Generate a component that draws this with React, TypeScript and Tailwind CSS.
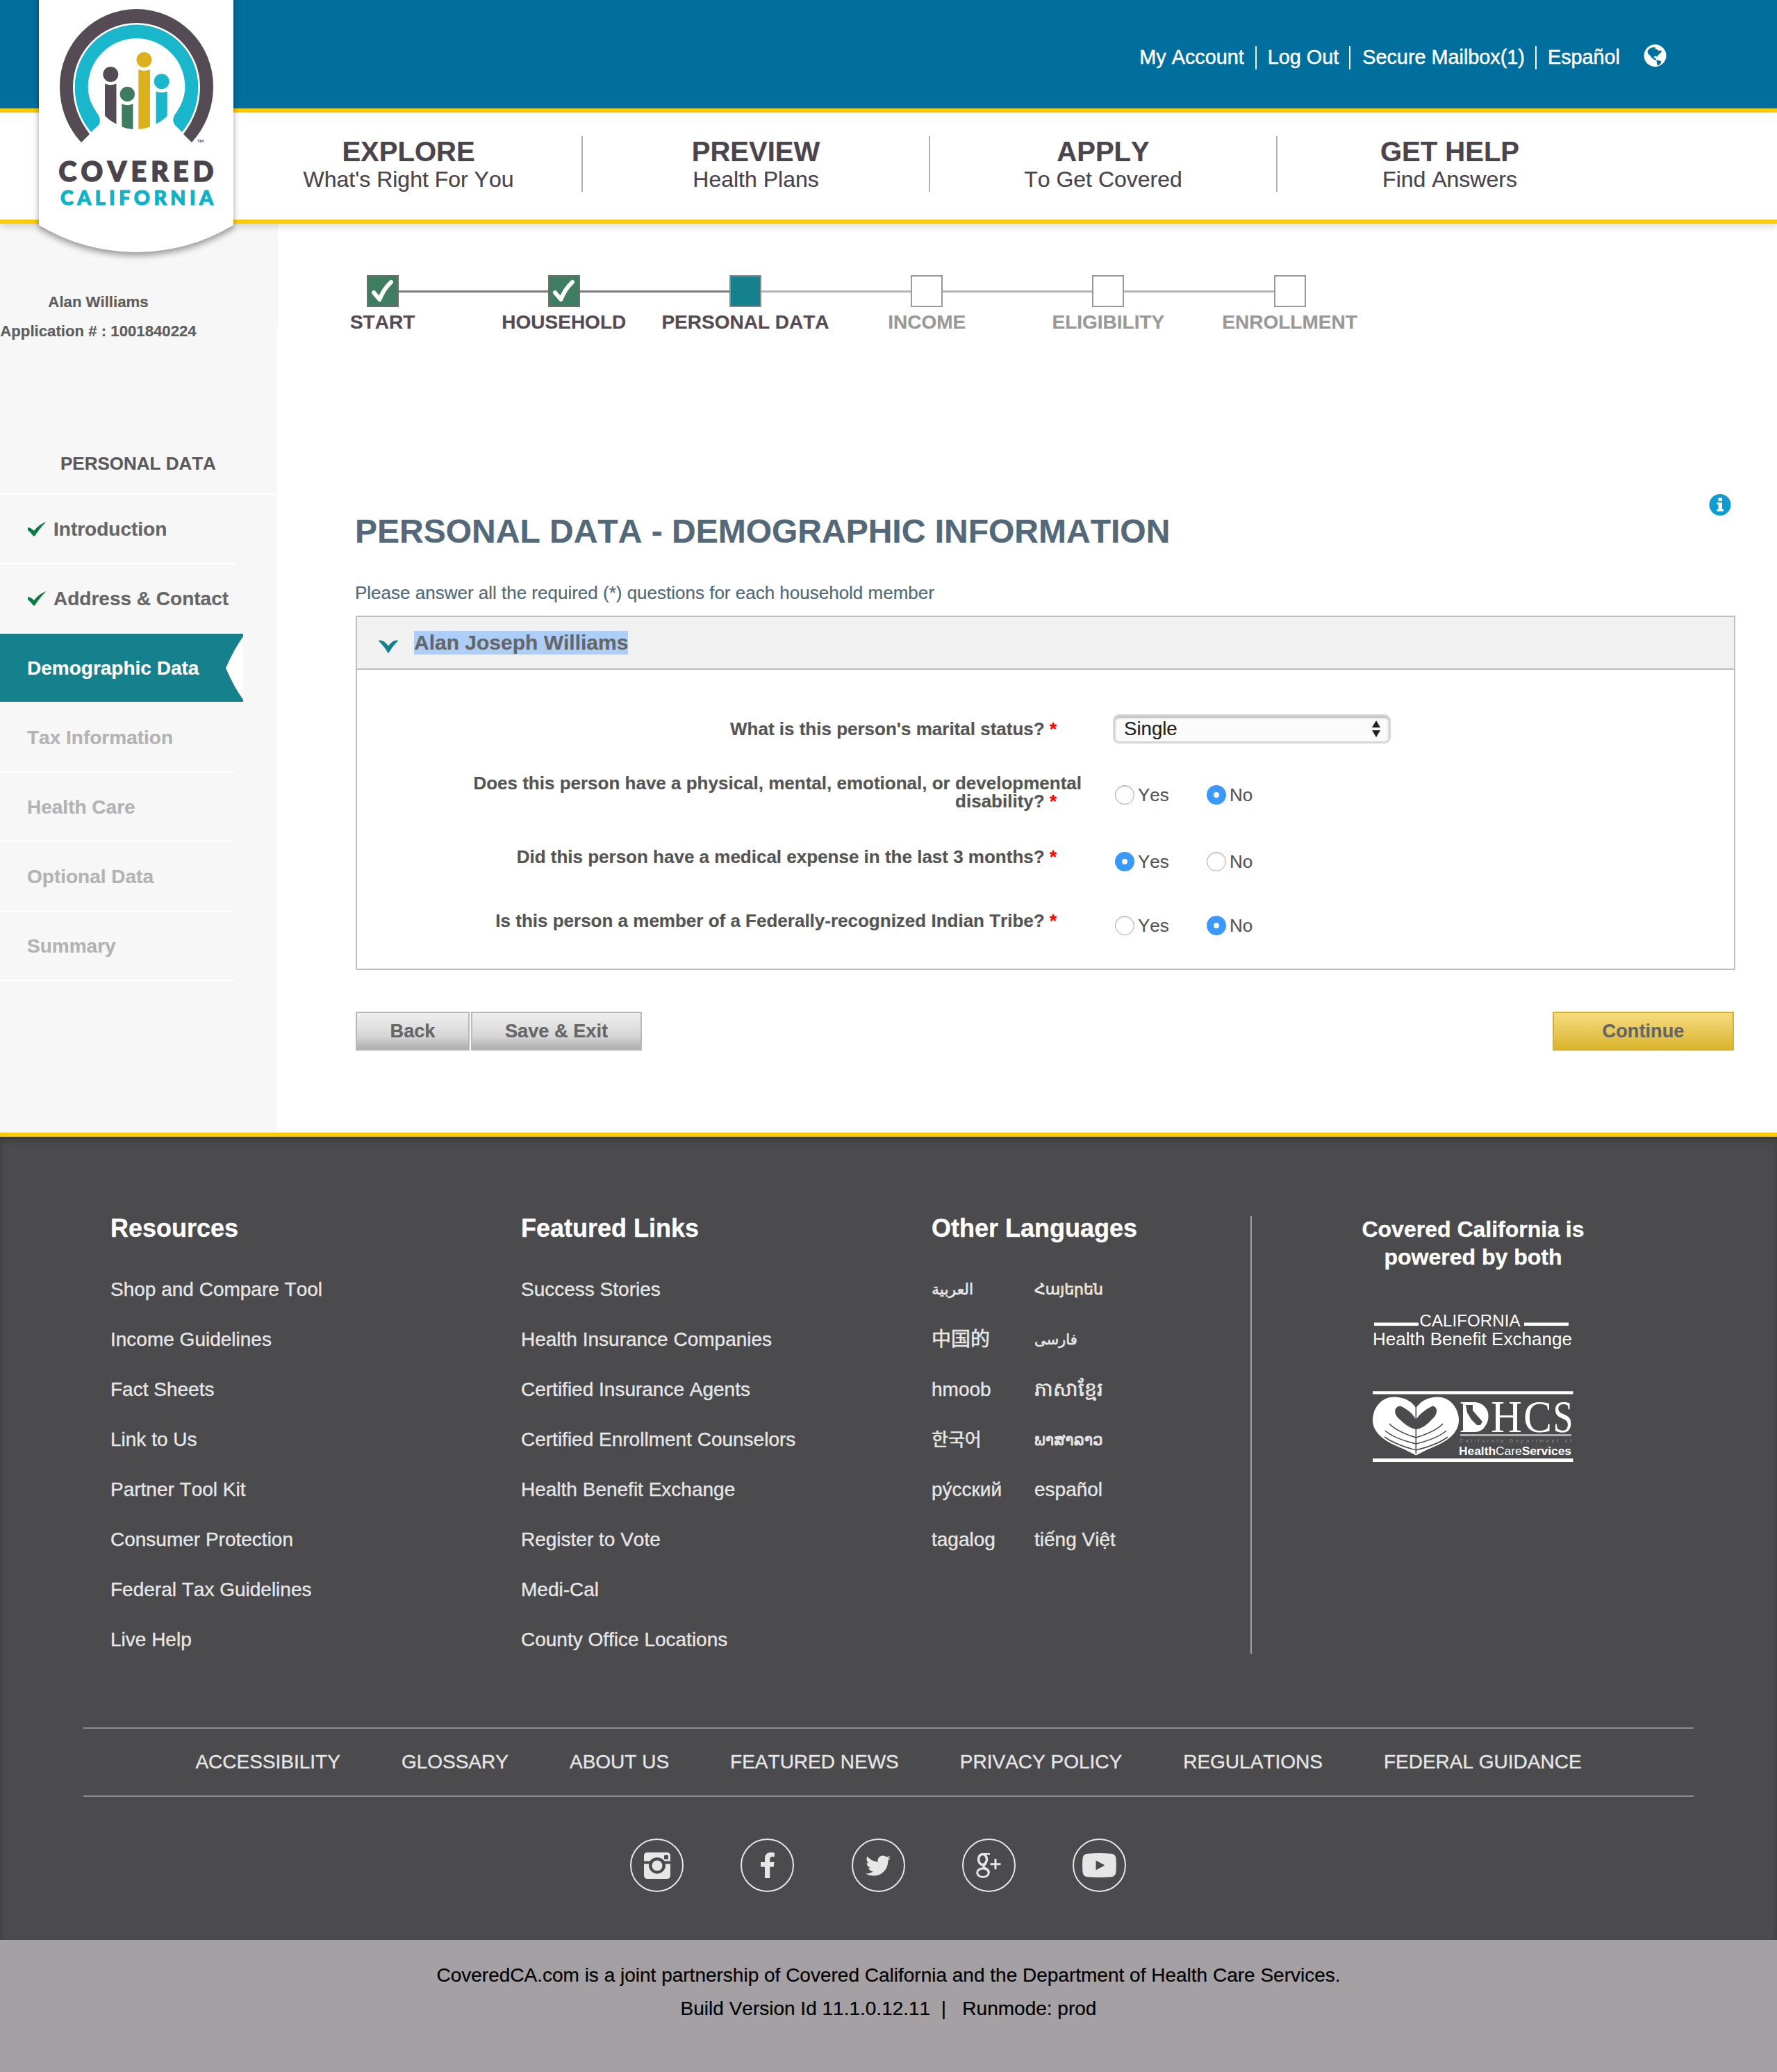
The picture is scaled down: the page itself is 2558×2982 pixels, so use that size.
import type { ReactNode } from "react";
import { FaFacebookF, FaTwitter } from "react-icons/fa";

const NAV = [
  ["EXPLORE", "What's Right For You"],
  ["PREVIEW", "Health Plans"],
  ["APPLY", "To Get Covered"],
  ["GET HELP", "Find Answers"],
];

const STEPS: { label: string; state: "done" | "current" | "todo" }[] = [
  { label: "START", state: "done" },
  { label: "HOUSEHOLD", state: "done" },
  { label: "PERSONAL DATA", state: "current" },
  { label: "INCOME", state: "todo" },
  { label: "ELIGIBILITY", state: "todo" },
  { label: "ENROLLMENT", state: "todo" },
];

const RESOURCES = [
  "Shop and Compare Tool",
  "Income Guidelines",
  "Fact Sheets",
  "Link to Us",
  "Partner Tool Kit",
  "Consumer Protection",
  "Federal Tax Guidelines",
  "Live Help",
];

const FEATURED = [
  "Success Stories",
  "Health Insurance Companies",
  "Certified Insurance Agents",
  "Certified Enrollment Counselors",
  "Health Benefit Exchange",
  "Register to Vote",
  "Medi-Cal",
  "County Office Locations",
];

const LANGS_A: [string, string][] = [
  ["العربية", "text-[22px] [-webkit-text-stroke:0.6px_currentColor]"],
  ["中国的", "text-[28px] [-webkit-text-stroke:0.6px_currentColor]"],
  ["hmoob", "text-[28px]"],
  ["한국어", "text-[26px] [-webkit-text-stroke:0.6px_currentColor]"],
  ["ру́сский", "text-[28px]"],
  ["tagalog", "text-[28px]"],
];

const LANGS_B: [string, string][] = [
  ["Հայերեն", "text-[22px] [-webkit-text-stroke:0.8px_currentColor]"],
  ["فارسی", "text-[21px] [-webkit-text-stroke:0.6px_currentColor]"],
  ["ភាសាខ្មែរ", "text-[28px] [-webkit-text-stroke:0.6px_currentColor]"],
  ["ພາສາລາວ", "text-[23px] [-webkit-text-stroke:0.8px_currentColor]"],
  ["español", "text-[28px]"],
  ["tiếng Việt", "text-[28px]"],
];

const FOOTER_NAV = [
  "ACCESSIBILITY",
  "GLOSSARY",
  "ABOUT US",
  "FEATURED NEWS",
  "PRIVACY POLICY",
  "REGULATIONS",
  "FEDERAL GUIDANCE",
];

function Logo() {
  return (
    <svg width="400" height="400" viewBox="0 0 400 400" className="absolute left-0 top-0 z-20">
      <g style={{ filter: "drop-shadow(0 5px 5px rgba(0,0,0,0.38))" }}>
        <path d="M56 -20V324A270.8 270.8 0 0 0 336 324V-20Z" fill="#fff" />
      </g>
      <path
        d="M117 205C97 183 86 155 86 124A110.5 111 0 0 1 307 124C307 155 296 183 276 205L264 193C280 172 288 150 288 125A91.5 92 0 0 0 105 125C105 150 113 172 129 193Z"
        fill="#544b54"
      />
      <path
        d="M131 190C116 172 107.7 150 107.7 125A88.8 89.5 0 0 1 285.3 125C285.3 150 277 172 262 190L252 180Q247 174 251 166C261 152 266.3 140 266.3 125A69.8 69.8 0 0 0 126.7 125C126.7 140 132 152 142 166Q146 174 142 180Z"
        fill="#1ab7cc"
      />
      <circle cx="159.3" cy="107" r="11" fill="#544b54" />
      <path d="M151 120.500Q159.300 124 167.500 120.500V178.500Q158 174 151 166.500Z" fill="#544b54" />
      <circle cx="183.300" cy="135.500" r="10.700" fill="#3d7c5f" />
      <path d="M175.300 149.500Q183.300 153 191.500 149.500V186Q183 185.500 175.300 182.500Z" fill="#3d7c5f" />
      <circle cx="207.500" cy="86" r="11" fill="#dbb21e" />
      <path d="M199.300 100Q207.500 103.500 216 100V182.500Q208 185.500 199.300 186Z" fill="#dbb21e" />
      <circle cx="232.700" cy="117.300" r="11" fill="#1ab7cc" />
      <path d="M224.500 131.500Q232.700 135 240.700 131.500V166.500Q234 174 224.500 178.500Z" fill="#1ab7cc" />
      <text x="284" y="205" fontSize="6" fontFamily="Lato" fontWeight="900" fill="#544b54">TM</text>
      <text x="84.500" y="261.300" fontSize="39" fontFamily="Lato" fontWeight="900" fill="#4c444d" stroke="#4c444d" strokeWidth="1.600" textLength="223" lengthAdjust="spacing">COVERED</text>
      <text x="87" y="295.300" fontSize="28.500" fontFamily="Lato" fontWeight="900" fill="#0fb3c8" stroke="#0fb3c8" strokeWidth="1.200" textLength="220" lengthAdjust="spacing">CALIFORNIA</text>
    </svg>
  );
}

function GlobeIcon() {
  return (
    <svg width="33" height="32" viewBox="0 0 32 32">
      <circle cx="16" cy="16" r="16" fill="#fff" />
      <path
        d="M5 9.500L8.500 5.500L13 4L17 4.500L16 6.500L19 7L21 9L24.500 8.500L25.500 10.500L22.500 13.500L20 15.500L19 18L17 16.500L14.500 17.500L14 20L17 19.500L17.500 22L15.500 22.500L11.500 19.500L9 16L6 13.500Z"
        fill="#006f9d"
      />
      <path d="M17.500 23L20.500 22.500L25 24.500L23.500 28L20 30.500L18.500 28L18.500 25.500Z" fill="#006f9d" />
    </svg>
  );
}

function Header() {
  return (
    <header className="relative z-10">
      <Logo />
      <div className="flex h-[162px] justify-end border-b-[6px] border-[#ffcc00] bg-[#006f9d] pr-[159px] pt-[64px] text-[28.8px] leading-[34px] text-white [-webkit-text-stroke:0.5px_white]">
        <div className="mt-[2px] flex h-[34px] leading-[32px]">
          <a className="border-r-2 border-white pr-[16px]">My Account</a>
          <a className="border-r-2 border-white pl-[16px] pr-[15px]">Log Out</a>
          <a className="border-r-2 border-white pl-[17px] pr-[15px]">Secure Mailbox(1)</a>
          <a className="pl-[16px] pr-[34px]">Español</a>
        </div>
        <GlobeIcon />
      </div>
      <nav className="flex h-[160px] border-b-[6px] border-[#ffcc00] bg-white pl-[339px] pt-[34px] text-[#4c444d] shadow-[0_5px_10px_rgba(0,0,0,0.13)]">
        {NAV.map(([title, sub], i) => (
          <div
            key={title}
            className={`h-[80px] text-center ${i < 3 ? "w-[500px] border-r-2 border-[#b3b0b3]" : "w-[496px]"}`}
          >
            <div className="text-[40px] font-bold leading-[44px]">{title}</div>
            <div className="text-[32px] leading-[36px]">{sub}</div>
          </div>
        ))}
      </nav>
    </header>
  );
}

function CheckIcon() {
  return (
    <svg width="27" height="21" viewBox="0 0 27 21" className="mr-[11px]">
      <path d="M0 8Q5 8.500 9 13Q16 3.500 26.500 0Q18 8 10 20.500H8Q4 14.500 0 12Z" fill="#0b7a43" />
    </svg>
  );
}

function SideItem({ label, state }: { label: string; state: "done" | "current" | "todo" }) {
  if (state === "current") {
    return (
      <div className="flex h-[100px] w-[350px] justify-between border-b-2 border-white bg-[#14818d] pl-[39px]">
        <span className="pt-[2px] text-[28px] font-bold leading-[96px] text-white">{label}</span>
        <svg width="25" height="98" viewBox="0 0 25 98">
          <path d="M25 4Q12 22 0 49.500Q12 77 25 95Z" fill="#fff" />
        </svg>
      </div>
    );
  }
  return (
    <div
      className={`flex h-[100px] items-center border-b-2 border-white pl-[40px] ${
        state === "done" ? "w-[340px] text-[#666666]" : "w-[338px] text-[#b3b3b3]"
      }`}
    >
      {state === "done" && <CheckIcon />}
      <span className="-ml-px whitespace-nowrap pt-[2px] text-[28px] font-bold leading-[96px]">{label}</span>
    </div>
  );
}

function Sidebar() {
  return (
    <aside className="w-[400px] shrink-0 font-bold">
      <div className="h-[149px] bg-[#f7f7f7] pt-[92px] text-[#5e5e5e]">
        <div className="w-[283px] whitespace-nowrap text-center text-[22.200px] leading-[42px]">
          <div>Alan Williams</div>
          <div>Application # : 1001840224</div>
        </div>
      </div>
      <div className="h-[1159px] w-[398px] bg-[#f7f7f7] pt-[179px]">
        <div className="h-[62px] border-b-2 border-white pl-[87px] text-[26px] leading-[34px] text-[#5a5a5a]">
          PERSONAL DATA
        </div>
        <SideItem label="Introduction" state="done" />
        <SideItem label="Address & Contact" state="done" />
        <SideItem label="Demographic Data" state="current" />
        <SideItem label="Tax Information" state="todo" />
        <SideItem label="Health Care" state="todo" />
        <SideItem label="Optional Data" state="todo" />
        <SideItem label="Summary" state="todo" />
      </div>
    </aside>
  );
}

function StepBox({ state }: { state: "done" | "current" | "todo" }) {
  if (state === "done") {
    return (
      <div className="flex size-[46px] shrink-0 items-center justify-center border-2 border-[#6d7069] bg-[#3f7d63]">
        <svg width="34" height="34" viewBox="0 0 34 34" fill="none" stroke="#fff" strokeWidth="6" strokeLinecap="round" strokeLinejoin="round">
          <path d="M4 19L12.500 29Q18 14 29 4" />
        </svg>
      </div>
    );
  }
  if (state === "current") {
    return <div className="size-[46px] shrink-0 border-2 border-[#8b8a93] bg-[#14818d]" />;
  }
  return <div className="size-[46px] shrink-0 border-2 border-[#999999] bg-white" />;
}

function Steps() {
  return (
    <div className="ml-[20px] flex">
      {STEPS.map(({ label, state }, i) => (
        <div key={label} className="w-[261.200px] text-center">
          <div className="flex items-center">
            <div className={`h-[3px] flex-1 ${i === 0 ? "" : i < 3 ? "bg-[#7f787e]" : "bg-[#b3b3b3]"}`} />
            <StepBox state={state} />
            <div className={`h-[3px] flex-1 ${i === 5 ? "" : i < 2 ? "bg-[#7f787e]" : "bg-[#b3b3b3]"}`} />
          </div>
          <div
            className={`mt-[6px] whitespace-nowrap text-[28px] font-bold leading-[32px] ${
              state === "todo" ? "text-[#999999]" : "text-[#554b54]"
            }`}
          >
            {label}
          </div>
        </div>
      ))}
    </div>
  );
}

function Radio({ label, on }: { label: string; on: boolean }) {
  return (
    <label className="flex w-[132px] items-center text-[26px] leading-[28px] text-[#555555]">
      {on ? (
        <span className="mr-[5px] flex size-[28px] items-center justify-center rounded-full bg-[#3b99fc]">
          <span className="size-[8px] rounded-full bg-white" />
        </span>
      ) : (
        <span className="mr-[5px] size-[28px] rounded-full border-[1.500px] border-[#a8a8a8] bg-white shadow-[inset_0_2px_2px_rgba(0,0,0,0.1)]" />
      )}
      {label}
    </label>
  );
}

function Question({ label, rowClass, labelClass, children }: { label: ReactNode; rowClass: string; labelClass: string; children: ReactNode }) {
  return (
    <div className={`flex ${rowClass}`}>
      <div className={`w-[1043px] text-right text-[26px] font-bold leading-[26px] text-[#555555] ${labelClass}`}>
        {label} <span className="mr-[36px] text-[#ff0000]">*</span>
      </div>
      {children}
    </div>
  );
}

function YesNo({ value, className }: { value: "yes" | "no"; className: string }) {
  return (
    <div className={`ml-[48px] flex items-start ${className}`}>
      <Radio label="Yes" on={value === "yes"} />
      <Radio label="No" on={value === "no"} />
    </div>
  );
}

function Main() {
  return (
    <main className="flex-1 pt-[74px]">
      <Steps />
      <div className="mt-[231px] flex justify-end pr-[66px]">
        <svg width="32" height="31" viewBox="0 0 32 31">
          <circle cx="16" cy="15.500" r="15.500" fill="#0d9dd0" />
          <path d="M13.500 5.500H19V10H13.500ZM11.500 12H19V22H21V25H11.500V22H13.500V15H11.500Z" fill="#fff" />
        </svg>
      </div>
      <div className="ml-[112px] w-[1986px]">
        <h1 className="-ml-px -mt-px whitespace-nowrap text-[48px] font-bold leading-[48px] text-[#536878]">
          PERSONAL DATA - DEMOGRAPHIC INFORMATION
        </h1>
        <p className="-ml-px mt-[49px] text-[26px] leading-[30px] text-[#506a79]">
          Please answer all the required (*) questions for each household member
        </p>
        <section className="mt-[18px] h-[510px] border-2 border-[#bfbfbf]">
          <div className="flex h-[76px] items-start border-b-2 border-[#bfbfbf] bg-[#f1f1f1] pl-[30px] pt-[20px]">
            <svg width="30" height="20" viewBox="0 0 30 20" className="mr-[22px] mt-[13px]">
              <path d="M0.500 1Q5 -0.500 9 2.500Q12.500 5 15 8.500Q17.500 5 21 2.500Q25 -0.500 29.500 1Q21 9 15 19.500Q9 9 0.500 1Z" fill="#14818d" />
            </svg>
            <span className="bg-[#accef7] text-[30px] font-bold leading-[34px] text-[#666666]">
              Alan Joseph Williams
            </span>
          </div>
          <div className="pt-[64px]">
            <Question label="What is this person's marital status?" rowClass="h-[86px]" labelClass="pt-[8px]">
              <div className="ml-[45px] flex h-[42px] w-[400px] items-center justify-between rounded-[9px] border-[3px] border-[#d6d6d6] bg-[#fbfbfb] pl-[13px] pr-[12px] text-[27.600px] leading-[36px] text-[#222222] shadow-[inset_0_2px_3px_rgba(0,0,0,0.3)]">
                Single
                <svg width="12" height="24" viewBox="0 0 12 24" fill="#222">
                  <path d="M6 0L12 10H0ZM6 24L0 14H12Z" />
                </svg>
              </div>
            </Question>
            <Question
              label={
                <>
                  Does this person have a physical, mental, emotional, or developmental
                  <br />
                  disability?
                </>
              }
              rowClass="h-[106px]"
              labelClass=""
            >
              <YesNo value="no" className="pt-[16px]" />
            </Question>
            <Question label="Did this person have a medical expense in the last 3 months?" rowClass="h-[92px]" labelClass="">
              <YesNo value="yes" className="pt-[6px]" />
            </Question>
            <Question label="Is this person a member of a Federally-recognized Indian Tribe?" rowClass="h-[60px]" labelClass="">
              <YesNo value="no" className="pt-[6px]" />
            </Question>
          </div>
        </section>
        <div className="mt-[60px] flex h-[56px] text-[27.200px] font-bold text-[#666666]">
          <button className="w-[164px] border-2 border-[#b8b8b8] bg-linear-to-b from-[#efefef] via-[#d6d6d6] via-65% to-[#adadad]">Back</button>
          <button className="ml-[2px] w-[246px] border-2 border-[#b8b8b8] bg-linear-to-b from-[#efefef] via-[#d6d6d6] via-65% to-[#adadad]">Save &amp; Exit</button>
          <button className="ml-auto mr-[2px] w-[261px] border-2 border-[#d8b02a] bg-linear-to-b from-[#f5dc7d] to-[#dbb426]">Continue</button>
        </div>
      </div>
    </main>
  );
}

function LinkColumn({ title, links, className }: { title: string; links: string[]; className: string }) {
  return (
    <div className={className}>
      <h2 className="mb-[32px] text-[36px] font-bold leading-[40px] text-white">{title}</h2>
      {links.map((l) => (
        <a key={l} className="block whitespace-nowrap leading-[72px]">
          {l}
        </a>
      ))}
    </div>
  );
}

function Langs({ items, className }: { items: [string, string][]; className: string }) {
  return (
    <div className={className}>
      {items.map(([text, size]) => (
        <div key={text} className={`h-[72px] whitespace-nowrap leading-[72px] ${size}`}>
          {text}
        </div>
      ))}
    </div>
  );
}

function PartnerLogos() {
  return (
    <svg width="290" height="230" viewBox="1976 1880 290 230" fill="#fff" fontWeight="400" className="mx-auto mt-[51px] overflow-visible font-normal">
      <path d="M1978 1903.500H2042V1908H1978ZM2194 1903.500H2258V1908H2194Z" />
      <text x="2043.500" y="1908.700" fontSize="24" fontFamily="Liberation Sans" textLength="145">CALIFORNIA</text>
      <text x="1976" y="1936" fontSize="26" fontFamily="Liberation Sans" textLength="287">Health Benefit Exchange</text>
      <path d="M1976 2002.300H2264.500V2006.500H1976ZM1976 2099H2264.500V2104H1976Z" />
      <path d="M2038.300 2026C2030 2014 2018 2010.500 2006 2010.500C1988 2011 1976 2027 1976 2044C1976 2060 1990 2072 2008 2080Q2025 2087 2038.300 2094.500Q2052 2087 2069 2080C2087 2072 2100 2060 2100 2044C2100 2027 2088 2011 2070 2010.500C2059 2010.500 2047 2014 2038.300 2026Z" />
      <path d="M2038.300 2043Q2032 2031 2016 2023.500C2006 2024 2006 2036 2014 2042Q2028 2056 2038.300 2057Q2050 2056 2062 2042C2070 2036 2070 2024 2062 2023.500Q2046 2031 2038.300 2043Z" fill="#4b4b4d" />
      <g stroke="#4b4b4d" fill="none" strokeWidth="1.600">
        <path d="M2038.300 2018V2092" />
        <path d="M2000 2049Q2010 2060 2038.300 2069Q2067 2060 2077 2049M1994 2059Q2006 2070 2038.300 2078Q2070 2070 2082 2059M1993 2068Q2008 2079 2038.300 2087Q2070 2079 2084 2068" />
      </g>
      <path d="M2106 2018H2118C2134 2018 2142.500 2026 2142.500 2038C2142.500 2051 2134 2060 2118 2060H2106Z" />
      <text x="2101" y="2060.500" fontSize="66" fontFamily="Liberation Serif" textLength="42" lengthAdjust="spacingAndGlyphs">D</text>
      <path d="M2110 2022H2120V2030L2134 2046L2131 2051H2126L2118 2043L2112 2033Z" fill="#4b4b4d" />
      <text x="2146" y="2060.500" fontSize="66" fontFamily="Liberation Serif" textLength="45" lengthAdjust="spacingAndGlyphs">H</text>
      <text x="2193" y="2060.500" fontSize="66" fontFamily="Liberation Serif" textLength="41" lengthAdjust="spacingAndGlyphs">C</text>
      <text x="2235.500" y="2060.500" fontSize="66" fontFamily="Liberation Serif" textLength="29" lengthAdjust="spacingAndGlyphs">S</text>
      <path d="M2102 2064H2262V2067H2102Z" opacity="0.550" />
      <text x="2101" y="2076" fontSize="7" fontFamily="Liberation Sans" textLength="161" opacity="0.350">California Department of</text>
      <text x="2100" y="2093.500" fontSize="17" fontFamily="Liberation Sans" fontWeight="bold" textLength="162" lengthAdjust="spacingAndGlyphs">
        Health<tspan fontWeight="normal">Care</tspan>Services
      </text>
    </svg>
  );
}

function Social({ children }: { children: ReactNode }) {
  return (
    <a className="flex size-[77px] items-center justify-center rounded-full border-2 border-[#e6e6e6]">{children}</a>
  );
}

function Footer() {
  return (
    <footer className="text-[28px] text-[#e6e6e6]">
      <div className="h-[1162px] border-t-[6px] border-[#ffcc00] bg-[#4b4b4d] shadow-[inset_0_5px_10px_rgba(0,0,0,0.22)] [-webkit-text-stroke:0.35px_currentColor]">
        <div className="flex h-[850px] pl-[159px] pt-[112px]">
          <LinkColumn title="Resources" links={RESOURCES} className="w-[591px]" />
          <LinkColumn title="Featured Links" links={FEATURED} className="w-[591px]" />
          <div className="w-[459px]">
            <h2 className="mb-[32px] text-[36px] font-bold leading-[40px] text-white">Other Languages</h2>
            <div className="flex">
              <Langs items={LANGS_A} className="w-[148px]" />
              <Langs items={LANGS_B} className="" />
            </div>
          </div>
          <div className="mt-[2px] h-[630px] w-[2px] bg-[#a5a0a3]" />
          <div className="w-[637px] text-center text-[32px] font-bold leading-[40px] text-white">
            <div className="pt-px">
              Covered California is
              <br />
              powered by both
            </div>
            <PartnerLogos />
          </div>
        </div>
        <nav className="mx-[120px] flex h-[100px] justify-center gap-[88px] border-y-2 border-[#8f8c8f] leading-[96px]">
          {FOOTER_NAV.map((l) => (
            <a key={l}>{l}</a>
          ))}
        </nav>
        <div className="ml-[907px] mt-[60px] flex gap-[82.300px]">
          <Social>
            <svg width="38" height="38" viewBox="0 0 38 38" fill="#e6e6e6">
              <path
                fillRule="evenodd"
                d="M5 0H33Q38 0 38 5V12.500H29.500A13 13 0 0 0 8.500 12.500H0V5Q0 0 5 0ZM30 4Q29 4 29 5V9Q29 10 30 10H34Q35 10 35 9V5Q35 4 34 4ZM0 16.500H7.200A12 12 0 1 0 30.800 16.500H38V33Q38 38 33 38H5Q0 38 0 33Z"
              />
              <circle cx="19" cy="19" r="7.500" />
            </svg>
          </Social>
          <Social>
            <FaFacebookF className="h-[37px] w-[24px]" />
          </Social>
          <Social>
            <FaTwitter className="size-[36px]" />
          </Social>
          <Social>
            <svg width="36" height="36" viewBox="0 0 36 36" fill="none" stroke="#e6e6e6">
              <ellipse cx="9.500" cy="9" rx="6" ry="7.500" strokeWidth="3.500" />
              <path d="M9 1.200H20" strokeWidth="2.400" />
              <path d="M14 15.500Q8 19 13 21.500Q18.500 24 18.300 28.500" strokeWidth="3.200" />
              <ellipse cx="10" cy="28.200" rx="8.300" ry="6.200" strokeWidth="3" />
              <path d="M20.500 15.700H35.500M28 8.200V23.200" strokeWidth="3" />
            </svg>
          </Social>
          <Social>
            <svg width="49" height="35" viewBox="0 0 49 35" fill="#e6e6e6">
              <path
                fillRule="evenodd"
                d="M8 0.700Q24.500 -0.700 41 0.700Q48 1 48.500 8Q49.300 17.500 48.500 27Q48 34 41 34.300Q24.500 35.700 8 34.300Q1 34 0.500 27Q-0.300 17.500 0.500 8Q1 1 8 0.700ZM19.500 10.500V24.500L32.500 17.500Z"
              />
            </svg>
          </Social>
        </div>
      </div>
      <div className="h-[190px] bg-[#a5a0a3] pt-[27px] text-center leading-[48px] text-black">
        <div>CoveredCA.com is a joint partnership of Covered California and the Department of Health Care Services.</div>
        <div className="whitespace-pre">{"Build Version Id 11.1.0.12.11  |   Runmode: prod"}</div>
      </div>
    </footer>
  );
}

export default function App() {
  return (
    <div className="w-[2558px] overflow-hidden bg-white font-['Liberation_Sans','DejaVu_Sans','Noto_Sans','Noto_Sans_CJK_SC','Noto_Sans_CJK_KR',sans-serif] [font-kerning:none] [-webkit-text-stroke:0.2px_currentColor]">
      <Header />
      <div className="flex h-[1308px]">
        <Sidebar />
        <Main />
      </div>
      <Footer />
    </div>
  );
}
